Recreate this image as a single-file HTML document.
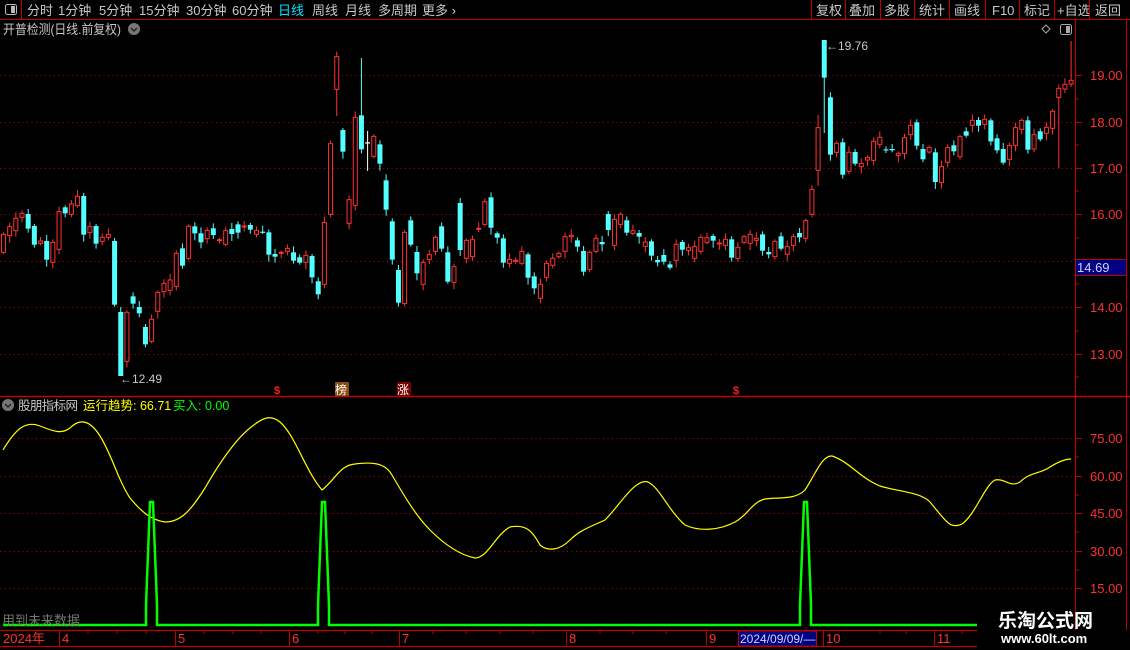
<!DOCTYPE html>
<html><head><meta charset="utf-8">
<style>
html,body{margin:0;padding:0;background:#000;}
body{width:1130px;height:650px;overflow:hidden;position:relative;font-family:"Liberation Sans","Noto Sans CJK SC",sans-serif;}
svg{position:absolute;left:0;top:0;}
text{font-family:"Liberation Sans","Noto Sans CJK SC",sans-serif;}
</style></head><body>
<svg id="s" width="1130" height="650" xmlns="http://www.w3.org/2000/svg">
<rect width="1130" height="650" fill="#000"/>
<line x1="0" y1="19.5" x2="1130" y2="19.5" stroke="#c00000"/>
<line x1="21.5" y1="0" x2="21.5" y2="19" stroke="#c00000"/>
<rect x="5.5" y="4.5" width="11" height="10" rx="2" fill="none" stroke="#bbb"/>
<rect x="11" y="6" width="4" height="7" fill="#bbb"/>
<g font-size="13" fill="#c8c8c8">
<text x="27" y="15">分时</text><text x="58" y="15">1分钟</text><text x="99" y="15">5分钟</text>
<text x="139" y="15">15分钟</text><text x="186" y="15">30分钟</text><text x="232" y="15">60分钟</text>
<text x="278" y="15" fill="#00e5ff">日线</text><text x="312" y="15">周线</text><text x="345" y="15">月线</text>
<text x="378" y="15">多周期</text><text x="422" y="15">更多 ›</text>
<text x="816" y="15">复权</text><text x="849" y="15">叠加</text><text x="884" y="15">多股</text>
<text x="919" y="15">统计</text><text x="954" y="15">画线</text><text x="992" y="15">F10</text>
<text x="1024" y="15">标记</text><text x="1057" y="15">+自选</text><text x="1095" y="15">返回</text>
</g>
<g stroke="#c00000"><line x1="811.5" y1="0" x2="811.5" y2="19"/><line x1="845.5" y1="0" x2="845.5" y2="19"/><line x1="880.5" y1="0" x2="880.5" y2="19"/><line x1="914.5" y1="0" x2="914.5" y2="19"/><line x1="949.5" y1="0" x2="949.5" y2="19"/><line x1="985.5" y1="0" x2="985.5" y2="19"/><line x1="1019.5" y1="0" x2="1019.5" y2="19"/><line x1="1054.5" y1="0" x2="1054.5" y2="19"/><line x1="1089.5" y1="0" x2="1089.5" y2="19"/></g>
<text x="3" y="34" font-size="13" fill="#c8c8c8" textLength="118" lengthAdjust="spacingAndGlyphs">开普检测(日线.前复权)</text>
<circle cx="134" cy="29" r="6" fill="#777"/><path d="M131 28 L134 31 L137 28" stroke="#222" stroke-width="1.5" fill="none"/>
<path d="M1042 29 L1046 25 L1050 29 L1046 33 Z" fill="none" stroke="#aaa"/>
<rect x="1060.5" y="24.5" width="11" height="10" rx="2" fill="none" stroke="#aaa"/><rect x="1066" y="26" width="4" height="7" fill="#aaa"/>
<line x1="1075.5" y1="20" x2="1075.5" y2="630" stroke="#c00000" stroke-width="1"/>
<line x1="1126.5" y1="20" x2="1126.5" y2="630" stroke="#c00000"/>
<line x1="0" y1="396.5" x2="1130" y2="396.5" stroke="#c00000" stroke-width="1.5"/>
<g stroke="#c00000" stroke-dasharray="1,3.5">
<line x1="0" y1="75.5" x2="1072" y2="75.5"/><line x1="0" y1="122.5" x2="1072" y2="122.5"/><line x1="0" y1="168.5" x2="1072" y2="168.5"/><line x1="0" y1="214.5" x2="1072" y2="214.5"/><line x1="0" y1="261.5" x2="1072" y2="261.5"/><line x1="0" y1="307.5" x2="1072" y2="307.5"/><line x1="0" y1="354.5" x2="1072" y2="354.5"/>
<line x1="0" y1="438.5" x2="1072" y2="438.5"/><line x1="0" y1="476.5" x2="1072" y2="476.5"/><line x1="0" y1="513.5" x2="1072" y2="513.5"/><line x1="0" y1="551.5" x2="1072" y2="551.5"/><line x1="0" y1="588.5" x2="1072" y2="588.5"/>
</g>
<g stroke="#c00000"><line x1="1075" y1="75.5" x2="1082" y2="75.5"/><line x1="1075" y1="122.5" x2="1082" y2="122.5"/><line x1="1075" y1="168.5" x2="1082" y2="168.5"/><line x1="1075" y1="214.5" x2="1082" y2="214.5"/><line x1="1075" y1="307.5" x2="1082" y2="307.5"/><line x1="1075" y1="354.5" x2="1082" y2="354.5"/>
<line x1="1075" y1="99" x2="1079" y2="99"/><line x1="1075" y1="145" x2="1079" y2="145"/><line x1="1075" y1="191" x2="1079" y2="191"/><line x1="1075" y1="238" x2="1079" y2="238"/><line x1="1075" y1="284" x2="1079" y2="284"/><line x1="1075" y1="331" x2="1079" y2="331"/><line x1="1075" y1="377" x2="1079" y2="377"/>
<line x1="1075" y1="438.5" x2="1082" y2="438.5"/><line x1="1075" y1="476.5" x2="1082" y2="476.5"/><line x1="1075" y1="513.5" x2="1082" y2="513.5"/><line x1="1075" y1="551.5" x2="1082" y2="551.5"/><line x1="1075" y1="588.5" x2="1082" y2="588.5"/>
<line x1="1075" y1="457" x2="1079" y2="457"/><line x1="1075" y1="495" x2="1079" y2="495"/><line x1="1075" y1="532" x2="1079" y2="532"/><line x1="1075" y1="570" x2="1079" y2="570"/>
</g>
<g font-size="13" fill="#ff3030">
<text x="1090" y="80">19.00</text><text x="1090" y="127">18.00</text><text x="1090" y="173">17.00</text><text x="1090" y="219">16.00</text><text x="1090" y="312">14.00</text><text x="1090" y="359">13.00</text>
<text x="1090" y="443">75.00</text><text x="1090" y="481">60.00</text><text x="1090" y="518">45.00</text><text x="1090" y="556">30.00</text><text x="1090" y="593">15.00</text>
</g>
<rect x="1075.5" y="259.5" width="51" height="16" fill="#000080" stroke="#c00000"/>
<text x="1077" y="272" font-size="13" fill="#d0d0ff">14.69</text>
<g id="candles"></g>
<text x="120" y="383" font-size="12" fill="#c8c8c8">←12.49</text>
<text x="826" y="50" font-size="12" fill="#c8c8c8">←19.76</text>
<text x="274" y="394" font-size="11" fill="#ff2020" font-weight="bold">$</text>
<rect x="335" y="382" width="14" height="14" fill="#8a4a10"/><text x="335" y="394" font-size="12" fill="#fff">榜</text>
<rect x="397" y="382" width="14" height="14" fill="#7a0000"/><text x="397" y="394" font-size="12" fill="#fff">涨</text>
<text x="733" y="394" font-size="11" fill="#ff2020" font-weight="bold">$</text>
<circle cx="8" cy="405" r="6" fill="#777"/><path d="M5 404 L8 407 L11 404" stroke="#222" stroke-width="1.5" fill="none"/>
<text x="18" y="410" font-size="12.5" fill="#c8c8c8" textLength="60">股朋指标网</text>
<text x="83" y="410" font-size="12.5" fill="#ffff00">运行趋势: 66.71</text>
<text x="173" y="410" font-size="12.5" fill="#00ff00">买入: 0.00</text>
<path fill="none" stroke="#ffff00" stroke-width="1.2" d="M3 450 C15 430,25 420,40 426 C55 432,62 434,70 428 C80 418,90 420,100 436 C112 455,118 480,130 498 C140 510,150 520,165 522 C180 522,190 512,205 488 C220 462,235 440,250 428 C262 418,270 414,280 422 C295 435,305 470,322 490 C335 480,340 465,355 464 C370 462,385 462,392 475 C402 492,415 515,430 530 C445 545,460 555,475 558 C488 558,495 535,510 527 C525 524,532 530,540 545 C548 552,560 550,570 540 C580 530,590 527,605 520 C620 505,635 478,648 482 C660 488,668 510,685 525 C700 532,720 530,735 522 C748 515,752 502,765 499 C780 497,795 500,805 490 C815 475,822 455,832 456 C850 462,860 478,880 486 C900 492,920 492,930 502 C945 520,950 530,962 524 C975 515,985 485,995 480 C1005 478,1010 488,1020 482 C1030 472,1040 474,1050 467 C1058 462,1065 459,1071 459"/>
<path fill="none" stroke="#00ff00" stroke-width="2.5" d="M3 625 L146 625 L146 605 L150 502 L153 502 L157 605 L157 625 L318 625 L318 605 L322 502 L325 502 L329 605 L329 625 L800 625 L800 605 L804 502 L807 502 L811 605 L811 625 L977 625"/>
<text x="2" y="625" font-size="13" fill="#777">用到未来数据</text>
<line x1="0" y1="630.5" x2="977" y2="630.5" stroke="#c00000" stroke-width="1.2"/>
<line x1="0" y1="646.5" x2="977" y2="646.5" stroke="#c00000" stroke-width="1.2"/>
<g stroke="#c00000"><line x1="59.5" y1="631" x2="59.5" y2="646"/><line x1="175.5" y1="631" x2="175.5" y2="646"/><line x1="289.5" y1="631" x2="289.5" y2="646"/><line x1="399.5" y1="631" x2="399.5" y2="646"/><line x1="566.5" y1="631" x2="566.5" y2="646"/><line x1="706.5" y1="631" x2="706.5" y2="646"/><line x1="823.5" y1="631" x2="823.5" y2="646"/><line x1="934.5" y1="631" x2="934.5" y2="646"/>
<line x1="88" y1="631" x2="88" y2="634"/><line x1="117" y1="631" x2="117" y2="634"/><line x1="146" y1="631" x2="146" y2="634"/><line x1="204" y1="631" x2="204" y2="634"/><line x1="233" y1="631" x2="233" y2="634"/><line x1="261" y1="631" x2="261" y2="634"/><line x1="318" y1="631" x2="318" y2="634"/><line x1="345" y1="631" x2="345" y2="634"/><line x1="372" y1="631" x2="372" y2="634"/><line x1="433" y1="631" x2="433" y2="634"/><line x1="466" y1="631" x2="466" y2="634"/><line x1="500" y1="631" x2="500" y2="634"/><line x1="533" y1="631" x2="533" y2="634"/><line x1="600" y1="631" x2="600" y2="634"/><line x1="633" y1="631" x2="633" y2="634"/><line x1="666" y1="631" x2="666" y2="634"/><line x1="880" y1="631" x2="880" y2="634"/><line x1="906" y1="631" x2="906" y2="634"/><line x1="962" y1="631" x2="962" y2="634"/></g>
<g font-size="13" fill="#ff3030">
<text x="3" y="643">2024年</text><text x="62" y="643">4</text><text x="178" y="643">5</text><text x="292" y="643">6</text><text x="402" y="643">7</text><text x="569" y="643">8</text><text x="709" y="643">9</text><text x="826" y="643">10</text><text x="937" y="643">11</text>
</g>
<rect x="738.5" y="631" width="78" height="15" fill="#000080" stroke="#c00000"/>
<text x="740" y="643" font-size="12" fill="#d0d0ff">2024/09/09/—</text>
<text x="998" y="627" font-size="19" font-weight="bold" fill="#fff" font-family="'Noto Sans CJK SC',sans-serif">乐淘公式网</text>
<text x="1001" y="643" font-size="13" font-weight="bold" fill="#fff" font-family="'Liberation Serif',serif">www.60lt.com</text>
</svg>
<script>
var A=[[583,637,'r'],[560,587,'r'],[535,572,'r'],[520,532,'r'],[522,566,'c'],[558,614,'c'],[603,610,'r'],[603,659,'c'],[607,667,'r'],[515,628,'r'],[502,520,'c'],[492,523,'r'],[469,497,'r'],[468,584,'c'],[560,578,'r'],[558,611,'c'],[592,604,'r'],[583,592,'r'],[603,794,'c'],[816,1008,'c'],[817,964,'r'],[769,791,'c'],[801,820,'c'],[861,913,'c'],[838,904,'r'],[757,814,'r'],[730,755,'r'],[720,751,'r'],[640,739,'r'],[625,677,'c'],[559,655,'r'],[559,580,'c'],[580,607,'c'],[571,596,'r'],[565,585,'c'],[599,601,'r'],[572,613,'r'],[567,582,'c'],[553,578,'c'],[558,560,'r'],[555,569,'c'],[571,583,'r'],[575,576,'c'],[577,644,'c'],[642,650,'c'],[637,639,'r'],[625,634,'r'],[637,662,'c'],[652,668,'c'],[646,667,'r'],[648,712,'c'],[724,763,'c'],[548,733,'r'],[311,523,'r'],[50,148,'r'],[270,335,'c'],[479,550,'r'],[232,496,'r'],[226,328,'c'],[307,309,'w'],[289,349,'r'],[313,371,'c'],[421,509,'c'],[544,659,'c'],[690,788,'c'],[577,790,'r'],[541,614,'c'],[636,700,'c'],[667,733,'r'],[644,658,'r'],[592,634,'r'],[559,626,'c'],[637,725,'c'],[680,727,'r'],[489,630,'c'],[601,655,'r'],[599,650,'r'],[565,567,'r'],[485,553,'r'],[472,563,'c'],[580,593,'c'],[595,668,'c'],[658,670,'r'],[661,663,'r'],[634,670,'r'],[643,713,'c'],[709,745,'c'],[733,775,'r']];
var B=[[670,712,'r'],[655,676,'r'],[640,650,'r'],[590,634,'r'],[586,590,'r'],[601,620,'c'],[633,695,'c'],[637,688,'r'],[595,634,'r'],[606,613,'c'],[522,570,'c'],[538,616,'r'],[523,553,'r'],[541,578,'c'],[572,580,'r'],[579,590,'c'],[606,619,'r'],[604,647,'c'],[660,667,'c'],[645,665,'c'],[673,683,'c'],[613,661,'r'],[606,629,'c'],[623,631,'r'],[620,655,'r'],[592,634,'r'],[593,607,'r'],[588,602,'c'],[609,612,'r'],[598,616,'r'],[598,653,'c'],[622,655,'r'],[590,607,'r'],[583,610,'r'],[595,601,'r'],[583,632,'c'],[636,643,'c'],[604,650,'r'],[589,626,'c'],[620,643,'r'],[590,616,'r'],[579,592,'c'],[542,595,'r'],[448,523,'r'],[263,391,'r'],[0,113,'c'],[172,344,'c'],[310,337,'r'],[307,404,'c'],[337,394,'r'],[336,371,'c'],[370,380,'r'],[352,360,'r'],[304,361,'r'],[292,313,'r'],[328,330,'c'],[327,331,'c'],[340,346,'r'],[293,340,'r'],[256,284,'r'],[247,317,'c'],[327,358,'c'],[322,336,'r'],[337,426,'c'],[380,428,'r'],[322,367,'r'],[316,334,'c'],[290,350,'r'],[274,287,'c'],[241,256,'r'],[240,257,'c'],[238,253,'r'],[241,304,'c'],[295,331,'c'],[327,368,'c'],[317,358,'r'],[263,316,'r'],[241,268,'r'],[241,329,'c'],[284,327,'r'],[274,298,'c'],[262,280,'r'],[214,265,'r'],[145,172,'r'],[133,147,'r'],[121,132,'r']];
var W={19:[null,376],54:[null,116],58:[58,null],59:[131,171],133:[40,133],132:[115,186],171:[null,168],173:[41,null]};
var all=A.concat(B),g=document.getElementById('candles'),h='';
var sp=(1071-3.4)/(all.length-1);
for(var i=0;i<all.length;i++){var d=all[i],x=1+i*sp,t=d[0]/3+40,b=d[1]/3+40;
 var col=d[2]=='r'?'#ff3232':(d[2]=='c'?'#54ffff':'#ffffff');
 var wt=t-2-(i*7%5),wb=b+2+(i*11%6);
 if(W[i]){if(W[i][0]!=null)wt=W[i][0];if(W[i][1]!=null)wb=W[i][1];}
 h+='<line x1="'+(x+2.5)+'" y1="'+wt+'" x2="'+(x+2.5)+'" y2="'+wb+'" stroke="'+col+'"/>';
 if(d[2]=='r')h+='<rect x="'+(x+0.5)+'" y="'+t+'" width="4" height="'+Math.max(b-t,1)+'" fill="#000" stroke="'+col+'"/>';
 else h+='<rect x="'+x+'" y="'+t+'" width="5" height="'+Math.max(b-t,1.2)+'" fill="'+col+'"/>';}
g.innerHTML=h;
</script>
</body></html>
